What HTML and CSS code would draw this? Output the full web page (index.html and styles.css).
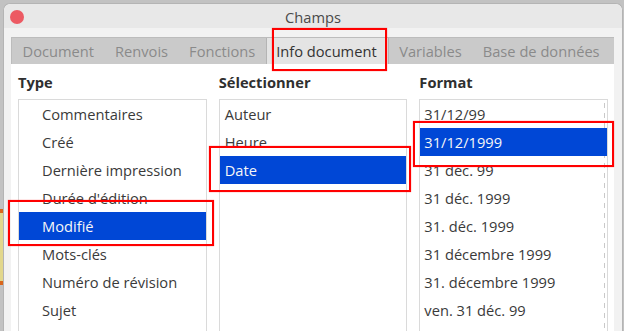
FILE: index.html
```html
<!DOCTYPE html>
<html lang="fr">
<head>
    <meta charset="UTF-8">
    <title>Champs</title>
    <link rel="stylesheet" href="styles.css">
</head>
<body>

    <div class="desk-item"></div>

    <div class="window">
        <div class="titlebar">
            <span class="close"></span>
            <span class="title">Champs</span>
            <span></span>
        </div>

        <div class="dialog">
            <div class="tabs">
                <div class="tab">Document</div>
                <div class="tab">Renvois</div>
                <div class="tab">Fonctions</div>
                <div class="tab active">Info document</div>
                <div class="tab">Variables</div>
                <div class="tab">Base de données</div>
            </div>

            <div class="panel">
                <div class="column">
                    <h3>Type</h3>
                    <ul class="list list-type">
                        <li>Commentaires</li>
                        <li>Créé</li>
                        <li>Dernière impression</li>
                        <li>Durée d'édition</li>
                        <li class="selected">Modifié</li>
                        <li>Mots-clés</li>
                        <li>Numéro de révision</li>
                        <li>Sujet</li>
                    </ul>
                </div>
                <div class="column">
                    <h3>Sélectionner</h3>
                    <ul class="list">
                        <li>Auteur</li>
                        <li>Heure</li>
                        <li class="selected">Date</li>
                    </ul>
                </div>
                <div class="column">
                    <h3>Format</h3>
                    <ul class="list list-format">
                        <li>31/12/99</li>
                        <li class="selected">31/12/1999</li>
                        <li>31 déc. 99</li>
                        <li>31 déc. 1999</li>
                        <li>31. déc. 1999</li>
                        <li>31 décembre 1999</li>
                        <li>31. décembre 1999</li>
                        <li>ven. 31 déc. 99</li>
                    </ul>
                </div>
            </div>
        </div>
    </div>

    <!-- red marks drawn over the screenshot -->
    <div class="mark mark-tab"></div>
    <div class="mark mark-type"></div>
    <div class="mark mark-select"></div>
    <div class="mark mark-format"></div>

</body>
</html>
```

FILE: styles.css
```css
body {
    margin: 0;
    height: 331px;
    overflow: hidden;
    background: #c2c2c2;
    font-family: "Open Sans", "Noto Sans", sans-serif;
    font-size: 14.67px;
    color: #3a3a3a;
    position: relative;
}
.desk-item {
    position: absolute;
    left: 0;
    top: 209px;
    width: 3px;
    height: 68px;
    background: #e2d78c;
    border-top: 4px solid #d9661c;
    border-bottom: 4px solid #d9661c;
}
.window {
    margin: 3px 0 0 3px;
    width: 618px;
    height: 327px;
    border: 1px solid #b4b4b4;
    border-bottom: none;
    border-radius: 7px 7px 0 0;
    background: #f2f2f2;
    position: relative;
}
.titlebar {
    height: 24px;
    display: grid;
    grid-template-columns: 1fr auto 1fr;
    align-items: center;
    background: #e8e8e8;
    border-radius: 7px 7px 0 0;
}
.close {
    width: 14px;
    height: 14px;
    margin-left: 6px;
    margin-top: 1px;
    border-radius: 50%;
    background: #ec5a63;
}
.title {
    color: #4a4a4a;
    margin-top: 2px;
}
.dialog {
    padding: 9px 8px 0 7px;
}
.tabs {
    display: flex;
    height: 26px;
    background: #cacaca;
    border-top: 1px solid #bcbcbc;
    border-left: 1px solid #bcbcbc;
    white-space: nowrap;
    overflow: hidden;
}
.tab {
    flex-shrink: 0;
    padding: 1px 10.5px 0 10.5px;
    line-height: 25px;
    color: #8a8a8a;
}
.tab.active {
    background: #e4e4e4;
    color: #333;
    border-left: 1px solid #b4b4b4;
    border-right: 1px solid #b4b4b4;
    padding: 1px 11px 0 9.5px;
}
.panel {
    background: #fff;
    height: 268px;
    padding: 8px 6px 0 7px;
    display: flex;
    gap: 12px;
}
.column {
    width: 189px;
}
h3 {
    margin: 0 0 7px 0;
    font-size: 14.67px;
    line-height: 20px;
    font-weight: bold;
    color: #2f2f2f;
}
.list {
    list-style: none;
    margin: 0;
    padding: 0;
    height: 240px;
    border: 1px solid #dadada;
    border-bottom: none;
}
.list li {
    height: 28px;
    padding-left: 5px;
    line-height: 29px;
    overflow: hidden;
    white-space: nowrap;
}
.list-type li {
    padding-left: 23px;
}
.list-format {
    background: linear-gradient(#c9c9c9 50%, transparent 50%) right 2px top 3px / 1px 10px repeat-y, #fff;
}
.list-format li {
    padding-left: 4px;
}
.list li.selected {
    background: #0047d6;
    color: #f6f6f6;
}
.mark {
    position: absolute;
    border: 2px solid #f00;
    box-shadow: 0 0 1px rgba(255, 0, 0, 0.6);
    box-sizing: border-box;
}
.mark-tab {
    left: 272px;
    top: 28px;
    width: 115px;
    height: 43px;
}
.mark-type {
    left: 8px;
    top: 200px;
    width: 206px;
    height: 46px;
}
.mark-select {
    left: 209px;
    top: 146px;
    width: 202px;
    height: 46px;
}
.mark-format {
    left: 413px;
    top: 121px;
    width: 201px;
    height: 46px;
}
```
